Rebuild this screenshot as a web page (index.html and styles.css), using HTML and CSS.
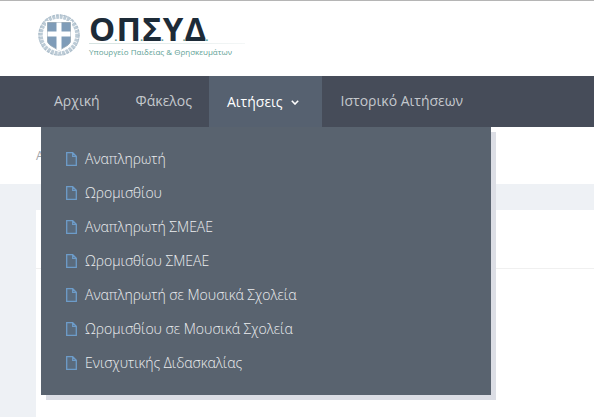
FILE: index.html
```html
<!DOCTYPE html>
<html lang="el">
<head>
  <meta charset="UTF-8" />
  <title>ΟΠΣΥΔ</title>
  <link rel="stylesheet" href="styles.css">
</head>
<body>
  <header class="top">
    <svg class="emblem" viewBox="0 0 42 42" width="42" height="42">
      <circle cx="21" cy="21" r="18.500" fill="none" stroke="#bccbd6" stroke-width="4.500" stroke-dasharray="3 .8"/>
      <circle cx="21" cy="21" r="20" fill="none" stroke="#a3b6c5" stroke-width="1" stroke-dasharray="1.500 2"/>
      <path d="M8 7h26v20c0 5-7 7-13 11-6-4-13-6-13-11z" fill="#fff"/>
      <path d="M9.500 8.500h23v18.500c0 4-6.500 6-11.500 9.500-5-3.500-11.500-5.500-11.500-9.500z" fill="#7f9cb8" stroke="#98a9b6" stroke-width="1"/>
      <path d="M18.500 8.500h5v9h9v5h-9v13l-2.500 1.500-2.500-1.500v-13h-9v-5h9z" fill="#fff"/>
    </svg>
    <div class="brand">
      <div class="brand-name">Ο<i>.</i>Π<i>.</i>Σ<i>.</i>Υ<i>.</i>Δ<i>.</i></div>
      <div class="brand-sub">Υπουργείο Παιδείας &amp; Θρησκευμάτων</div>
    </div>
  </header>

  <nav class="menu">
    <a class="menu-item">Αρχική</a>
    <a class="menu-item">Φάκελος</a>
    <div class="menu-item active">
      Αιτήσεις
      <svg class="chev" viewBox="0 0 8 5" width="8" height="5"><path d="M.8.8l3.200 3.200 3.200-3.200" fill="none" stroke="#fff" stroke-width="1.600"/></svg>
      <ul class="dropdown">
        <li><svg class="doc" viewBox="0 0 11 14" width="11" height="14"><path d="M.7.7h6l3.600 3.600v9h-9.600zM6.700.7v3.600h3.600" fill="#5c7a99" fill-opacity=".35" stroke="#6d9cc9" stroke-width="1.300"/></svg>Αναπληρωτή</li>
        <li><svg class="doc" viewBox="0 0 11 14" width="11" height="14"><path d="M.7.7h6l3.600 3.600v9h-9.600zM6.700.7v3.600h3.600" fill="#5c7a99" fill-opacity=".35" stroke="#6d9cc9" stroke-width="1.300"/></svg>Ωρομισθίου</li>
        <li><svg class="doc" viewBox="0 0 11 14" width="11" height="14"><path d="M.7.7h6l3.600 3.600v9h-9.600zM6.700.7v3.600h3.600" fill="#5c7a99" fill-opacity=".35" stroke="#6d9cc9" stroke-width="1.300"/></svg>Αναπληρωτή ΣΜΕΑΕ</li>
        <li><svg class="doc" viewBox="0 0 11 14" width="11" height="14"><path d="M.7.7h6l3.600 3.600v9h-9.600zM6.700.7v3.600h3.600" fill="#5c7a99" fill-opacity=".35" stroke="#6d9cc9" stroke-width="1.300"/></svg>Ωρομισθίου ΣΜΕΑΕ</li>
        <li><svg class="doc" viewBox="0 0 11 14" width="11" height="14"><path d="M.7.7h6l3.600 3.600v9h-9.600zM6.700.7v3.600h3.600" fill="#5c7a99" fill-opacity=".35" stroke="#6d9cc9" stroke-width="1.300"/></svg>Αναπληρωτή σε Μουσικά Σχολεία</li>
        <li><svg class="doc" viewBox="0 0 11 14" width="11" height="14"><path d="M.7.7h6l3.600 3.600v9h-9.600zM6.700.7v3.600h3.600" fill="#5c7a99" fill-opacity=".35" stroke="#6d9cc9" stroke-width="1.300"/></svg>Ωρομισθίου σε Μουσικά Σχολεία</li>
        <li><svg class="doc" viewBox="0 0 11 14" width="11" height="14"><path d="M.7.7h6l3.600 3.600v9h-9.600zM6.700.7v3.600h3.600" fill="#5c7a99" fill-opacity=".35" stroke="#6d9cc9" stroke-width="1.300"/></svg>Ενισχυτικής Διδασκαλίας</li>
      </ul>
    </div>
    <a class="menu-item">Ιστορικό Αιτήσεων</a>
  </nav>

  <div class="crumbs">Α</div>
  <main class="page">
    <div class="panel">
      <div class="panel-head"></div>
    </div>
  </main>
</body>
</html>
```

FILE: styles.css
```css
html, body {
  height: 100%;
}

body {
  margin: 0;
  font-family: "Open Sans", sans-serif;
  background-color: #fff;
  overflow: hidden;
}

.top {
  height: 75px;
  border-top: 1px solid #b5b5b5;
  display: flex;
  align-items: flex-start;
  padding-left: 38px;
  background-color: #fff;
}

.emblem {
  margin-top: 13px;
}

.brand {
  margin-left: 9px;
  margin-top: 13px;
  width: 156px;
}

.brand-name {
  font-weight: 700;
  font-size: 33px;
  line-height: 30px;
  color: #1d2b38;
  white-space: nowrap;
  background: linear-gradient(to right, #d5e2e0, #f4f7f7) left bottom / 100% 1px no-repeat;
}

.brand-name i {
  font-style: normal;
  font-size: 11px;
  line-height: 1;
  color: #5d9c95;
  margin: 0 -1px;
}

.brand-sub {
  font-size: 8px;
  font-weight: 500;
  line-height: 11px;
  margin-top: 2px;
  color: #5f9f96;
  white-space: nowrap;
}

.menu {
  height: 51px;
  background-color: #464c59;
  display: flex;
  padding-left: 36px;
  position: relative;
}

.menu-item {
  padding: 0 18px;
  line-height: 50px;
  font-size: 14px;
  color: #c4c8cd;
}

.menu-item.active {
  background-color: #566170;
  color: #fff;
  font-weight: 500;
  margin: 0 1px 0 -1px;
  padding-right: 23px;
  display: flex;
  gap: 8px;
  align-items: center;
}

.chev {
  margin-top: 2px;
}

.dropdown {
  position: absolute;
  top: 51px;
  left: 41px;
  width: 450px;
  height: 268px;
  margin: 0;
  padding: 15px 0 0;
  box-sizing: border-box;
  list-style: none;
  background-color: #59636f;
  box-shadow: 5px 5px 0 #dcdee5;
  z-index: 10;
}

.dropdown li {
  height: 34px;
  display: flex;
  align-items: center;
  gap: 8px;
  padding-left: 25px;
  font-size: 14px;
  font-weight: 300;
  color: #eceef0;
}

.crumbs {
  height: 57px;
  line-height: 57px;
  padding-left: 36px;
  font-size: 12px;
  color: #a0a5ab;
}

.page {
  background-color: #eef1f5;
  padding: 26px 0 0 36px;
  height: 233px;
  box-sizing: border-box;
}

.panel {
  background-color: #fff;
  height: 100%;
}

.panel-head {
  height: 58px;
  border-bottom: 1px solid #f0f0f0;
}
```
